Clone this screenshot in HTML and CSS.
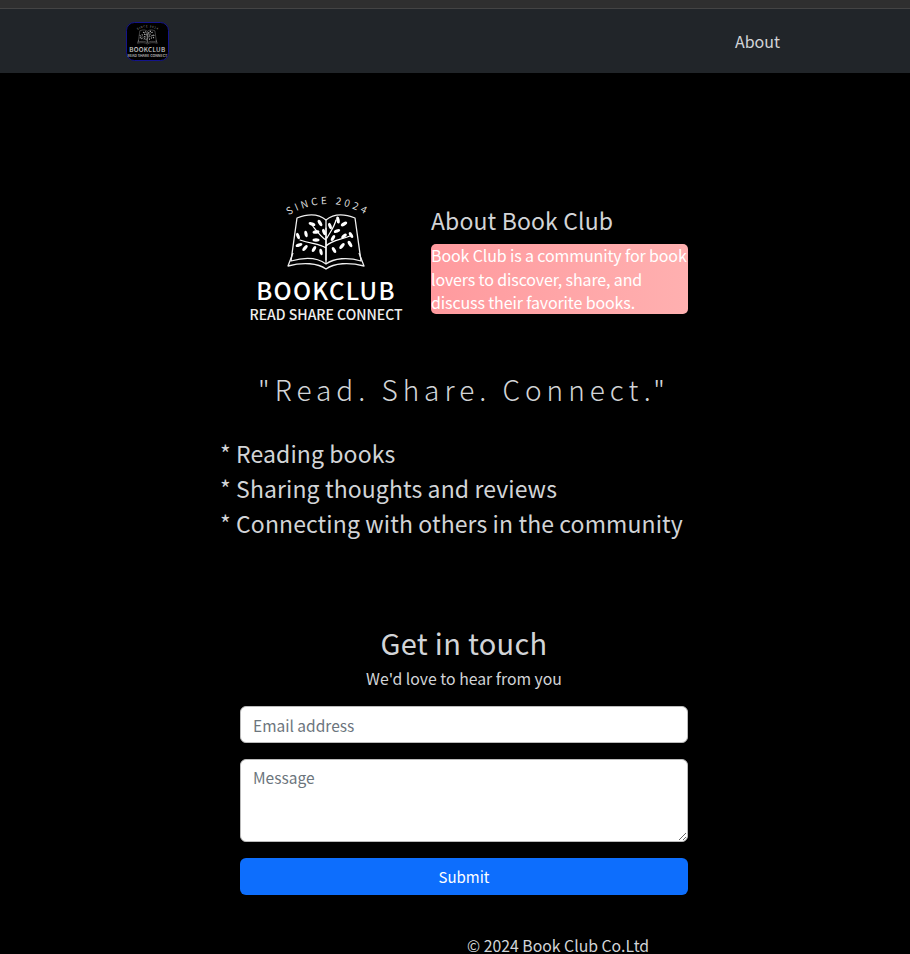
FILE: index.html
```html
<!DOCTYPE html>
<html lang="en">
<head>
    <meta charset="UTF-8">
    <meta name="viewport" content="width=device-width, initial-scale=1.0">
    <title>Book Club</title>
    <link rel="stylesheet" href="styles.css">
</head>
<body>
    <!-- top strip -->
    <div class="top-strip"></div>

    <!-- navbar -->
    <nav class="navbar">
        <a class="brand" href="#">
            <svg class="brand-logo" viewBox="0 0 43 39">
                <rect x="0.5" y="0.5" width="42" height="38" rx="8" fill="#000" stroke="#14148c"/>
                <use href="#club-logo" transform="translate(-1 1.500) scale(0.26)" opacity="0.8"/>
            </svg>
        </a>
        <a class="nav-link" href="#">About</a>
    </nav>

    <main class="content">
        <!-- about -->
        <section class="about">
            <svg class="about-logo" viewBox="0 0 175 140">
                <defs>
                    <path id="arc" d="M46 27 Q87 1 130 27"/>
                </defs>
                <g id="club-logo">
                    <text class="logo-since"><textPath href="#arc" startOffset="50%" text-anchor="middle">SINCE 2024</textPath></text>
                    <g fill="none" stroke="#eee" stroke-width="1.300" stroke-linejoin="round">
                        <path d="M86 30 C80 25 72 22 57 28 L51 71 C65 67 78 68 86 74 C94 68 108 67 121 71 L115 28 C100 22 92 25 86 30 Z"/>
                        <path d="M86 30 V74"/>
                        <path d="M53 63 L48 76 C63 72 78 73 86 79 C94 73 109 72 124 76 L119 63"/>
                    </g>
                    <g fill="none" stroke="#fff" stroke-width="1.200" stroke-linecap="round">
                        <path d="M86 70 V38 M86 58 C80 54 72 54 60 50 M86 50 C80 46 76 40 72 35 M86 56 C92 50 100 50 110 46 M87 48 C90 42 94 38 96 30"/>
                    </g>
                    <g fill="#fff">
                        <ellipse cx="72" cy="34" rx="3.500" ry="1.700" transform="rotate(20 72 34)"/>
                        <ellipse cx="80" cy="33" rx="3.500" ry="1.700" transform="rotate(60 80 33)"/>
                        <ellipse cx="76" cy="42" rx="3.500" ry="1.700" transform="rotate(-10 76 42)"/>
                        <ellipse cx="84" cy="42" rx="3.300" ry="1.600" transform="rotate(70 84 42)"/>
                        <ellipse cx="98" cy="30" rx="3.500" ry="1.700" transform="rotate(80 98 30)"/>
                        <ellipse cx="104" cy="34" rx="3.500" ry="1.700" transform="rotate(-30 104 34)"/>
                        <ellipse cx="90" cy="36" rx="3.300" ry="1.600" transform="rotate(70 90 36)"/>
                        <ellipse cx="97" cy="41" rx="3.300" ry="1.600" transform="rotate(-20 97 41)"/>
                        <ellipse cx="58" cy="46" rx="3.300" ry="1.600" transform="rotate(70 58 46)"/>
                        <ellipse cx="66" cy="44" rx="3.300" ry="1.600" transform="rotate(80 66 44)"/>
                        <ellipse cx="59" cy="55" rx="3.500" ry="1.700" transform="rotate(-20 59 55)"/>
                        <ellipse cx="65" cy="58" rx="3.500" ry="1.700" transform="rotate(-50 65 58)"/>
                        <ellipse cx="74" cy="59" rx="3.300" ry="1.600" transform="rotate(-60 74 59)"/>
                        <ellipse cx="81" cy="62" rx="3.300" ry="1.600" transform="rotate(80 81 62)"/>
                        <ellipse cx="76" cy="50" rx="3.500" ry="1.700" transform="rotate(0 76 50)"/>
                        <ellipse cx="111" cy="45" rx="3.300" ry="1.600" transform="rotate(60 111 45)"/>
                        <ellipse cx="104" cy="46" rx="3.300" ry="1.600" transform="rotate(-40 104 46)"/>
                        <ellipse cx="110" cy="54" rx="3.500" ry="1.700" transform="rotate(60 110 54)"/>
                        <ellipse cx="102" cy="56" rx="3.500" ry="1.700" transform="rotate(-50 102 56)"/>
                        <ellipse cx="94" cy="60" rx="3.300" ry="1.600" transform="rotate(60 94 60)"/>
                        <ellipse cx="93" cy="48" rx="3.300" ry="1.600" transform="rotate(-60 93 48)"/>
                    </g>
                    <text class="logo-name" x="86" y="110" text-anchor="middle">BOOKCLUB</text>
                    <text class="logo-tag" x="86" y="130" text-anchor="middle">READ SHARE CONNECT</text>
                </g>
            </svg>
            <div class="about-text">
                <h2>About Book Club</h2>
                <p class="about-box">Book Club is a community for book lovers to discover, share, and discuss their favorite books.</p>
            </div>
        </section>

        <!-- slogan -->
        <h2 class="slogan">"Read. Share. Connect."</h2>

        <ul class="points">
            <li>* Reading books</li>
            <li>* Sharing thoughts and reviews</li>
            <li>* Connecting with others in the community</li>
        </ul>

        <!-- contact form -->
        <section class="contact">
            <h2>Get in touch</h2>
            <p class="contact-sub">We'd love to hear from you</p>
            <form class="contact-form">
                <input class="field" type="email" placeholder="Email address">
                <textarea class="field field-message" placeholder="Message"></textarea>
                <button class="submit" type="button">Submit</button>
            </form>
        </section>
    </main>

    <footer class="footer">© 2024 Book Club Co.Ltd</footer>
</body>
</html>
```

FILE: styles.css
```css
/* base */
body {
    margin: 0;
    background-color: #000;
    color: #d2d4d7;
    font-family: "Noto Sans CJK KR", "Noto Sans", sans-serif;
    font-size: 16px;
    line-height: 1.5;
    overflow: hidden;
}

h2, p, ul {
    margin: 0;
    padding: 0;
    font-weight: 400;
}

.top-strip {
    height: 8px;
    background-color: #2f2f2f;
    border-bottom: 1px solid #444;
}

/* navbar */
.navbar {
    height: 64px;
    padding: 0 130px 0 126px;
    display: flex;
    align-items: center;
    justify-content: space-between;
    background-color: #212529;
}

.brand {
    display: flex;
}

.brand-logo {
    width: 43px;
    height: 39px;
}

.nav-link {
    color: #d2d4d7;
    text-decoration: none;
}

/* main */
.content {
    width: 448px;
    margin-left: 240px;
}

.about {
    margin-top: 117px;
    display: flex;
    align-items: center;
    gap: 16px;
}

.about-logo {
    flex: none;
    width: 175px;
    height: 140px;
}

.logo-since {
    font-size: 10px;
    letter-spacing: 3px;
    fill: #ddd;
}

.logo-name {
    font-size: 24px;
    font-weight: 500;
    letter-spacing: 1.300px;
    fill: #fff;
}

.logo-tag {
    font-size: 14px;
    font-weight: 500;
    fill: #eee;
}

.about-text {
    width: 257px;
    padding-top: 1px;
}

.about-text h2 {
    font-size: 23px;
    letter-spacing: 0.130px;
    line-height: 1.2;
    margin-bottom: 10px;
}

.about-box {
    color: #fff;
    font-size: 16px;
    letter-spacing: -0.130px;
    line-height: 23.400px;
    border-radius: 5px;
    background: linear-gradient(90deg, #ff9a9e, #ffb0b0);
}

.slogan {
    margin: 38px 0 0 -19px;
    width: 486px;
    text-align: center;
    font-size: 28px;
    font-weight: 300;
    letter-spacing: 5px;
    line-height: 1.5;
}

.points {
    list-style: none;
    margin: 26px 0 0 -20px;
    width: 480px;
    font-size: 23px;
    letter-spacing: 0.100px;
    line-height: 35px;
}

/* contact */
.contact {
    margin-top: 84px;
    text-align: center;
}

.contact h2 {
    font-size: 29px;
    letter-spacing: 0.300px;
    line-height: 1.2;
}

.contact-sub {
    margin-top: 7px;
    font-size: 15.800px;
}

.contact-form {
    margin-top: 16px;
    display: flex;
    flex-direction: column;
    gap: 16px;
}

.field {
    box-sizing: border-box;
    width: 100%;
    height: 37px;
    padding: 6px 12px;
    border: 1px solid #bbb;
    border-radius: 6px;
    background-color: #fff;
    font: inherit;
    font-size: 15.500px;
    color: #212529;
}

.field::placeholder {
    color: #6c757d;
    opacity: 1;
}

.field-message {
    display: block;
    height: 83px;
}

.submit {
    height: 37px;
    border: 0;
    border-radius: 6px;
    background-color: #0d6efd;
    color: #fff;
    font: inherit;
    font-size: 15px;
}

.footer {
    margin: 39px 0 0 467px;
    font-size: 15.800px;
    color: #d2d4d7;
}
```
